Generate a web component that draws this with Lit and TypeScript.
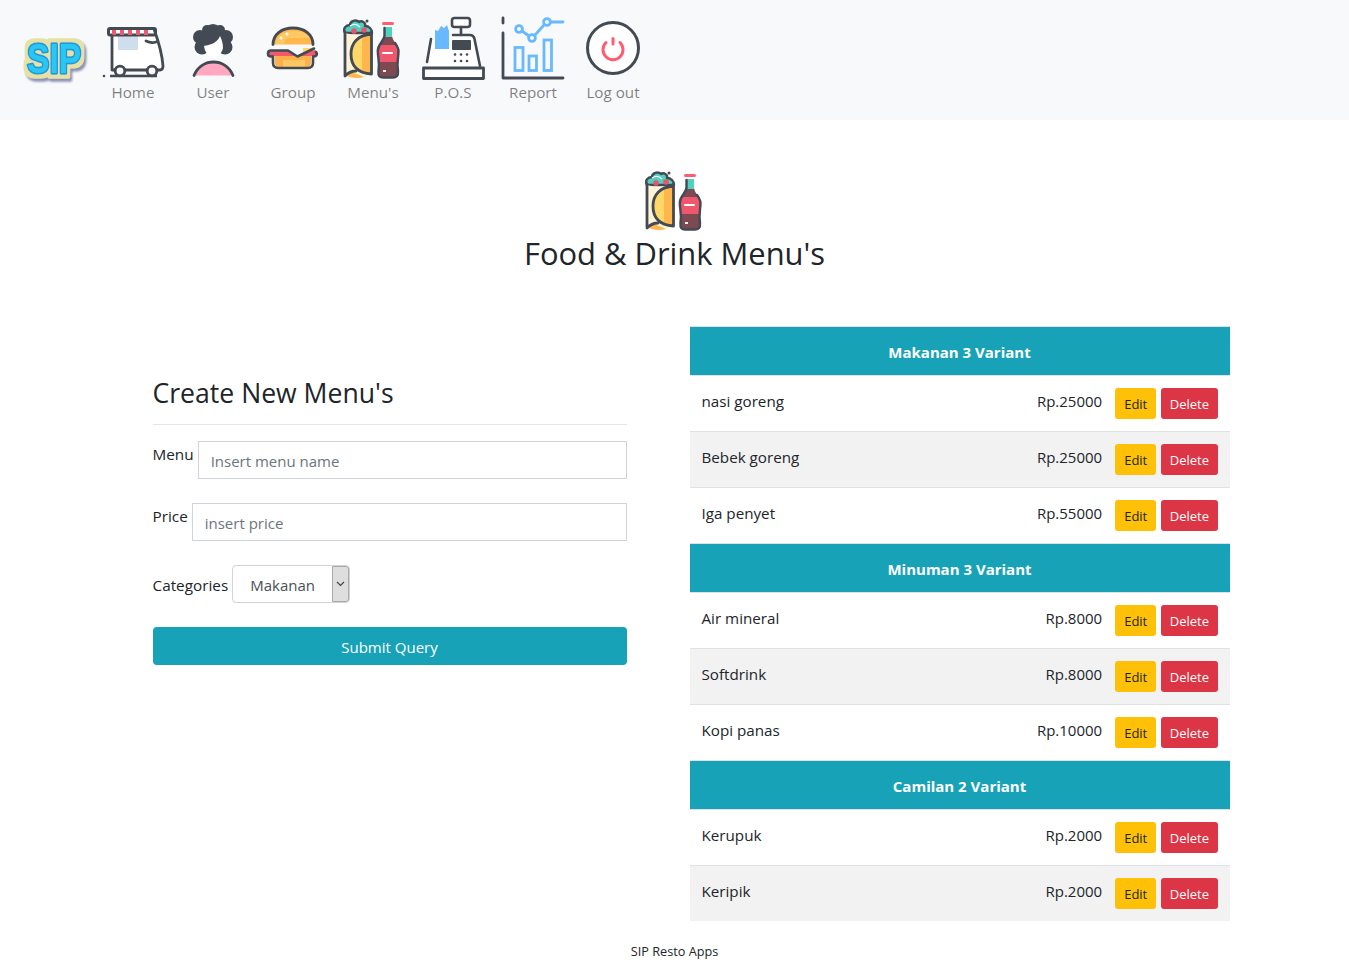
import {LitElement, html, css, svg} from 'lit';
import {customElement} from 'lit/decorators.js';

const DARK = '#434a54';

// all icons are drawn in page coordinates of the nav bar, the viewBox picks the window
const menuIcon = svg`
  <path d="M345 33 C342.500 28 346 25 350 25 C350 21 356 19 359 22 C362 20 366 23 365 26 C369 26 372 29 372 33Z" fill="#4fd1c0" stroke="${DARK}" stroke-width="2.400" stroke-linejoin="round"/>
  <path d="M350 26 C353 24 357 24 360 27" fill="none" stroke="#fff" stroke-width="1.200"/>
  <circle cx="367" cy="21" r="1.500" fill="${DARK}"/>
  <circle cx="354" cy="31" r="2.800" fill="#e9536b"/><circle cx="364" cy="30" r="2.800" fill="#e9536b"/>
  <path d="M345 33 C354 36 363 35 372 33 L372 74 C362 79 352 79 345 75Z" fill="#fff3d6"/>
  <path d="M371.500 34 C358 35 351 43 351 54 C351 66 358 73 371.500 74Z" fill="#ffd869"/>
  <path d="M362 37 C365 36 368 35 371.500 34 L371.500 74 C368 74 365 73 362 71Z" fill="#ffb74d"/>
  <path d="M345 75 C350 78 358 79 364 77 L352 72Z" fill="#ffb74d"/>
  <path d="M345 32 L345 75 M371.500 32 L371.500 74 M371.500 34 C358 35 351 43 351 54 C351 66 358 73 371.500 74 M345 76 C349 72 353 71 356 71" fill="none" stroke="${DARK}" stroke-width="2.800" stroke-linecap="round"/>
  <path d="M383.500 23.500 H392.500" stroke="#ff5c70" stroke-width="3" stroke-linecap="round"/>
  <path d="M385 27 H392 L392 36 C393 42 398 44 398 51 C398 58 396 62 397.500 71 C398 76 396 77.500 393 77.500 H383 C380 77.500 378 76 378.500 71 C380 62 378 58 378 51 C378 44 384 42 385 36Z" fill="#7c4a50"/>
  <path d="M385 27 H392 L392 37 L385 37Z" fill="#4fd1c0"/>
  <path d="M378 45 H398 C398 52 397.500 56 397 62 H379 C378.500 56 378 52 378 45Z" fill="#f0576c"/>
  <path d="M383 53 H392" stroke="#fff" stroke-width="2" stroke-linecap="round"/>
  <path d="M384.500 28 L384.500 36 C383.500 42 377.800 44 377.800 51 C377.800 58 380 62 378.500 71 C378 76 380 77.500 383 77.500 H393 C396 77.500 398.500 76 398 71 C396.500 62 398.500 58 398.500 51 C398.500 48 397 46 395 43" fill="none" stroke="${DARK}" stroke-width="2.400" stroke-linecap="round"/>
  <path d="M383 71 H386" stroke="#fff" stroke-width="1.800"/>`;

const icons: Record<string, {box: string; art: unknown}> = {
  home: {
    box: '101 16 64 64',
    art: svg`
      <path d="M113 36 H155 C158 44 161 52 162 70 H113Z" fill="#fff"/>
      <rect x="118" y="35" width="20" height="15" fill="#cfdeec"/>
      <rect x="108.500" y="28.500" width="47" height="6.500" rx="1.500" fill="#fff" stroke="${DARK}" stroke-width="3"/>
      <path d="M112 30 h4 v5 h-4z M120 30 h4 v5 h-4z M128 30 h4 v5 h-4z M136 30 h4 v5 h-4z M144 30 h4 v5 h-4z" fill="#f2596b"/>
      <path d="M112 36 V70 M154 29 C158 40 162 52 163 66 C163 68 162 70 160 70 H157 M125 70 H147 M115 70 H112 M146 41 C150 43 153 43 156 42" fill="none" stroke="${DARK}" stroke-width="2.800" stroke-linecap="round"/>
      <circle cx="120" cy="71" r="4.800" fill="#fff" stroke="${DARK}" stroke-width="2.800"/>
      <circle cx="152" cy="71" r="4.800" fill="#fff" stroke="${DARK}" stroke-width="2.800"/>
      <path d="M110 76 H157" stroke="${DARK}" stroke-width="2.400"/>
      <circle cx="104" cy="76" r="1.300" fill="${DARK}"/>`,
  },
  user: {
    box: '181 16 64 64',
    art: svg`
      <path d="M194 75.500 C198 66 206 62 213.500 62 C221 62 229 66 233 75.500Z" fill="#ffa8c0"/>
      <path d="M194 75.500 C198 66 206 62 213.500 62 C221 62 229 66 233 75.500" fill="none" stroke="${DARK}" stroke-width="2.800" stroke-linecap="round"/>
      <g fill="${DARK}">
        <circle cx="213" cy="33" r="9"/><circle cx="200" cy="37" r="7"/><circle cx="226" cy="37" r="7"/>
        <circle cx="202" cy="47" r="7.500"/><circle cx="225" cy="47" r="7.500"/><circle cx="207" cy="30" r="5"/><circle cx="220" cy="30" r="5"/>
        <rect x="200" y="34" width="27" height="14"/>
      </g>
      <path d="M204 46 C208 45 217 44 220 36 C222 40 223 44 223 48 C222 53 218 57 213.500 57 C209 57 205 53 204 46Z" fill="#fff"/>`,
  },
  group: {
    box: '261 16 64 64',
    art: svg`
      <path d="M273 44.500 C273 34 282 28 293 28 C304 28 313 34 313 44.500Z" fill="#ffb84d"/>
      <path d="M276 44 C276 36 284 31 294 31 C303 31 309 35 310 38 H290 C286 38 284 41 284 44Z" fill="#ffc861"/>
      <circle cx="281" cy="38" r="1.500" fill="#fff"/><circle cx="287" cy="34" r="1.500" fill="#fff"/>
      <path d="M273 44.500 C273 34 282 28 293 28 C304 28 313 34 313 44.500" fill="none" stroke="${DARK}" stroke-width="2.800" stroke-linecap="round"/>
      <path d="M275 56 H311 V63 C311 66 309 67.500 307 67.500 H279 C277 67.500 275 66 275 63Z" fill="#ffb04d"/>
      <path d="M283 60 H305 V67 H283Z" fill="#ffc861"/>
      <path d="M303 48 H311 V53 H303Z" fill="#ffd869"/>
      <path d="M271 51 H288 L298 57 L306 52 L315 50 C318 51 318 55 315 56 H271 C267.500 56 267.500 51 271 51Z" fill="#f2596b"/>
      <path d="M271 50.500 H288 L297.500 56.500 L314 48.500 M316 52 C318 55 316 56.500 313 56.500 V63 C313 66 311 68 308 68 H278 C275 68 273 66 273 63 V56.500 H271 C267 56.500 267 50.500 271 50.500" fill="none" stroke="${DARK}" stroke-width="2.600" stroke-linecap="round" stroke-linejoin="round"/>`,
  },
  menu: {box: '341 16 64 64', art: menuIcon},
  pos: {
    box: '421 16 64 64',
    art: svg`
      <path d="M453 35 H470 C473 35 475 37 475 39 L481 67 H428 L431 40 L453 35Z" fill="#fff"/>
      <path d="M435 49 V30 L438 31 L441 26 L444 28 L447 25 L449 31 V49Z" fill="#69b9ff"/>
      <rect x="452" y="40" width="19" height="10" rx="1" fill="${DARK}"/>
      <rect x="452" y="18" width="18" height="9" rx="2.500" fill="#fff" stroke="${DARK}" stroke-width="2.600"/>
      <path d="M461 27 V35 M453 35 H470 C473 35 474 37 474.500 39 L480 66 M431 39 L427 62" fill="none" stroke="${DARK}" stroke-width="2.600" stroke-linecap="round"/>
      <rect x="423.500" y="68" width="60" height="10.500" fill="#fff" stroke="${DARK}" stroke-width="2.800" stroke-linejoin="round"/>
      <g fill="${DARK}">
        <circle cx="455" cy="54.500" r="1.300"/><circle cx="461" cy="54.500" r="1.300"/><circle cx="467" cy="54.500" r="1.300"/>
        <circle cx="455" cy="61" r="1.300"/><circle cx="461" cy="61" r="1.300"/><circle cx="467" cy="61" r="1.300"/>
      </g>`,
  },
  report: {
    box: '501 16 64 64',
    art: svg`
      <path d="M503 18 V23 M503 33 V78 H563" fill="none" stroke="${DARK}" stroke-width="2.800" stroke-linecap="round" stroke-linejoin="round"/>
      <g fill="none" stroke="#69b9ff" stroke-width="2.800">
        <rect x="515" y="47.500" width="8" height="23"/>
        <rect x="529" y="56" width="7.500" height="14.500"/>
        <rect x="544" y="40" width="7.500" height="30.500"/>
        <path d="M522 31 L529 36 M535 35 L544 25 M551 22 H563" stroke-linecap="round"/>
        <circle cx="519" cy="29" r="3.400"/><circle cx="532" cy="38" r="3.400"/><circle cx="547" cy="22" r="3.400"/>
      </g>`,
  },
  logout: {
    box: '581 16 64 64',
    art: svg`
      <circle cx="613" cy="48" r="25.500" fill="#fff" stroke="${DARK}" stroke-width="3"/>
      <path d="M606 42.500 A10 10 0 1 0 620 42.500" fill="none" stroke="#ff5c70" stroke-width="3" stroke-linecap="round"/>
      <path d="M613 38.500 V44" stroke="#ff5c70" stroke-width="3" stroke-linecap="round"/>`,
  },
};

const navItems = [
  {icon: 'home', label: 'Home'},
  {icon: 'user', label: 'User'},
  {icon: 'group', label: 'Group'},
  {icon: 'menu', label: "Menu's"},
  {icon: 'pos', label: 'P.O.S'},
  {icon: 'report', label: 'Report'},
  {icon: 'logout', label: 'Log out'},
];

const sections = [
  {
    title: 'Makanan 3 Variant',
    rows: [
      {name: 'nasi goreng', price: 'Rp.25000'},
      {name: 'Bebek goreng', price: 'Rp.25000'},
      {name: 'Iga penyet', price: 'Rp.55000'},
    ],
  },
  {
    title: 'Minuman 3 Variant',
    rows: [
      {name: 'Air mineral', price: 'Rp.8000'},
      {name: 'Softdrink', price: 'Rp.8000'},
      {name: 'Kopi panas', price: 'Rp.10000'},
    ],
  },
  {
    title: 'Camilan 2 Variant',
    rows: [
      {name: 'Kerupuk', price: 'Rp.2000'},
      {name: 'Keripik', price: 'Rp.2000'},
    ],
  },
];

@customElement('app-root')
export class AppRoot extends LitElement {
  static styles = css`
    :host {
      display: block;
      font-family: 'Open Sans', 'Noto Sans', sans-serif;
      font-size: 15px;
      line-height: 24px;
      color: #212529;
      background: #fff;
    }
    * {
      box-sizing: border-box;
    }

    .navbar {
      display: flex;
      align-items: flex-start;
      height: 120px;
      padding: 16px 0 0 20px;
      background: #f8f9fa;
    }
    .logo {
      width: 73px;
      height: 64px;
      overflow: visible;
    }
    .logo text {
      font-family: 'Liberation Sans', sans-serif;
      font-weight: 700;
      font-size: 42px;
      paint-order: stroke;
      stroke-linejoin: round;
    }
    .nav-item {
      display: flex;
      flex-direction: column;
      align-items: center;
      width: 80px;
      font-size: 15.200px;
      color: rgba(0, 0, 0, 0.5);
    }
    .nav-item svg {
      display: block;
    }

    .page-head {
      padding-top: 48px;
      text-align: center;
    }
    .page-head svg {
      display: block;
      margin: 0 auto;
    }
    .page-head h2 {
      margin: 2px 0 0;
      font-size: 30.900px;
      font-weight: 400;
      line-height: 38px;
    }

    .columns {
      display: grid;
      grid-template-columns: 540px 540px;
      gap: 30px;
      width: 1110px;
      margin: 54px auto 0;
    }

    .create {
      padding: 50px 33px 0;
    }
    .create h3 {
      margin: 0;
      padding-bottom: 14px;
      border-bottom: 1px solid #e4e5e6;
      font-size: 26.600px;
      font-weight: 400;
      line-height: 34px;
    }
    .field {
      display: flex;
      align-items: flex-start;
      gap: 4px;
      margin-top: 24px;
    }
    .field:first-of-type {
      margin-top: 16px;
    }
    .field label {
      padding-top: 1px;
      font-size: 15.300px;
    }
    .field input {
      flex: 1;
      min-width: 0;
      height: 38px;
      padding: 7px 12px 5px;
      border: 1px solid #ced4da;
      font: inherit;
      color: #495057;
      background: #fff;
    }
    .field input::placeholder {
      color: #6c757d;
      opacity: 1;
    }
    .field.categories {
      align-items: center;
    }
    .field.categories label {
      padding-top: 2px;
    }
    .select-wrap {
      position: relative;
      width: 118px;
      height: 38px;
    }
    .select-wrap select {
      appearance: none;
      display: block;
      width: 100%;
      height: 100%;
      padding: 2px 12px 0 17px;
      border: 1px solid #ced4da;
      border-radius: 4px;
      font: inherit;
      color: #495057;
      background: #fff;
    }
    .select-arrow {
      position: absolute;
      top: 1px;
      right: 1px;
      display: flex;
      align-items: center;
      justify-content: center;
      width: 17px;
      height: 36px;
      border: 1px solid #a9a9a9;
      border-radius: 0 3px 3px 0;
      background: #dedede;
      pointer-events: none;
    }
    .submit {
      display: block;
      width: 100%;
      height: 38px;
      margin-top: 24px;
      padding: 2px 0 0;
      border: none;
      border-radius: 4px;
      font: inherit;
      color: #fff;
      background: #17a2b8;
    }

    .section-title {
      height: 49px;
      padding: 13px 12px 0;
      border-top: 1px solid #dee2e6;
      font-weight: 700;
      text-align: center;
      color: #fff;
      background: #17a2b8;
    }
    .row {
      display: flex;
      height: 56px;
      padding: 12px;
      border-top: 1px solid #dee2e6;
    }
    .row.striped {
      background: #f2f2f2;
    }
    .row-name {
      flex: 1;
      margin-top: 1px;
      font-size: 15.200px;
    }
    .row-price {
      margin: 1px 13px 0 0;
    }
    .btn {
      height: 31px;
      padding: 2px 8.500px 0;
      border: none;
      border-radius: 3px;
      font: inherit;
      font-size: 13px;
      line-height: 29px;
    }
    .btn.edit {
      padding: 2px 9px 0;
      color: #212529;
      background: #ffc107;
    }
    .btn.delete {
      margin-left: 5px;
      color: #fff;
      background: #dc3545;
    }

    .footer {
      padding: 20px 0 16px;
      font-size: 12.700px;
      line-height: 20px;
      text-align: center;
    }
  `;

  renderLogo() {
    return svg`
      <svg class="logo" viewBox="20 16 73 64" aria-hidden="true">
        <defs>
          <filter id="logo-edge" x="-30%" y="-40%" width="160%" height="180%">
            <feMorphology in="SourceAlpha" operator="dilate" radius="3.500" result="fat"/>
            <feOffset in="fat" dx="2.500" dy="2.500" result="moved"/>
            <feGaussianBlur in="moved" stdDeviation="1.200" result="soft"/>
            <feFlood flood-color="#8a8fb8"/>
            <feComposite in2="soft" operator="in" result="shadow"/>
            <feFlood flood-color="#e6e2a6"/>
            <feComposite in2="fat" operator="in" result="rim"/>
            <feMerge>
              <feMergeNode in="shadow"/>
              <feMergeNode in="rim"/>
              <feMergeNode in="SourceGraphic"/>
            </feMerge>
          </filter>
        </defs>
        <g transform="translate(27 73) scale(0.8 1)" filter="url(#logo-edge)">
          <text fill="#2cc6f4" stroke="#1d9bd8" stroke-width="3.500">SIP</text>
        </g>
      </svg>`;
  }

  renderIcon(name: string) {
    const icon = icons[name];
    return html`<svg width="64" height="64" viewBox="${icon.box}" aria-hidden="true">${icon.art}</svg>`;
  }

  renderSection(section: (typeof sections)[number]) {
    return html`
      <div class="section-title">${section.title}</div>
      ${section.rows.map(
        (row, i) => html`
          <div class="row ${i % 2 ? 'striped' : ''}">
            <span class="row-name">${row.name}</span>
            <span class="row-price">${row.price}</span>
            <button class="btn edit">Edit</button>
            <button class="btn delete">Delete</button>
          </div>
        `,
      )}
    `;
  }

  render() {
    return html`
      <nav class="navbar">
        ${this.renderLogo()}
        ${navItems.map(
          (item) => html`
            <div class="nav-item">${this.renderIcon(item.icon)}<span>${item.label}</span></div>
          `,
        )}
      </nav>

      <header class="page-head">
        ${this.renderIcon('menu')}
        <h2>Food &amp; Drink Menu's</h2>
      </header>

      <main class="columns">
        <form class="create">
          <h3>Create New Menu's</h3>
          <div class="field">
            <label>Menu</label>
            <input type="text" placeholder="Insert menu name" />
          </div>
          <div class="field">
            <label>Price</label>
            <input type="text" placeholder="insert price" />
          </div>
          <div class="field categories">
            <label>Categories</label>
            <div class="select-wrap">
              <select>
                <option>Makanan</option>
                <option>Minuman</option>
                <option>Camilan</option>
              </select>
              <span class="select-arrow">
                <svg width="9" height="6" viewBox="0 0 9 6"><path d="M1 1 L4.500 4.500 L8 1" fill="none" stroke="#444" stroke-width="1.200"/></svg>
              </span>
            </div>
          </div>
          <button class="submit" type="button">Submit Query</button>
        </form>

        <div class="menu-table">${sections.map((s) => this.renderSection(s))}</div>
      </main>

      <footer class="footer">SIP Resto Apps</footer>
    `;
  }
}
